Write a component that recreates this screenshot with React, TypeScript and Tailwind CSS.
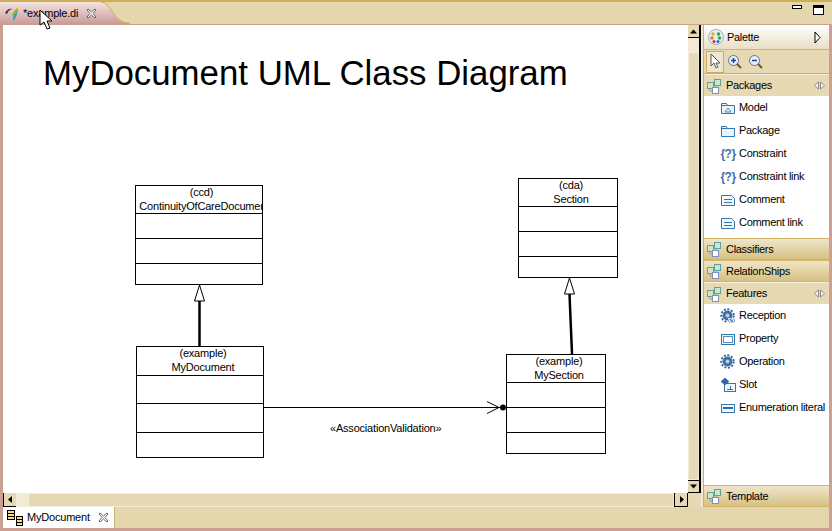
import React from 'react';

const FONT = "font-['Liberation_Sans',Arial,sans-serif]";

// small three-squares icon of the palette drawers
const DrawerIcon = () => (
  <svg width="16" height="16" viewBox="0 0 16 16" className="shrink-0">
    <rect x="1.500" y="4.500" width="6" height="6" fill="#cfe6c0" stroke="#6f9f8f" />
    <rect x="8.500" y="1.500" width="6" height="6" fill="#c9e8c8" stroke="#5f9f9f" />
    <rect x="6.500" y="9.500" width="6" height="6" fill="#ffffff" stroke="#7f8fc0" />
    <path d="M4 11v2h2M10 8v1" stroke="#8f9fb0" fill="none" />
  </svg>
);

const PinIcon = () => (
  <svg width="13" height="9" viewBox="0 0 13 9" className="shrink-0">
    <path d="M5.500 1 1.500 4.500l4 3.500zM7.500 1l4 3.500-4 3.500z" fill="#fff" stroke="#8a8a80" />
  </svg>
);

const FolderIcon = ({ mark }: { mark?: boolean }) => (
  <svg width="16" height="16" viewBox="0 0 16 16" className="shrink-0">
    <path d="M1.500 3.500h5l1 2h7v8h-13z" fill="#eaf3fb" stroke="#2f78b0" />
    <path d="M1.500 5.500h6" stroke="#2f78b0" />
    {mark && <path d="M5 12l3-4 3 4z" fill="none" stroke="#4f88b8" />}
  </svg>
);

const ConstraintIcon = () => (
  <span className="w-[16px] shrink-0 text-center text-[12px] leading-none font-bold text-[#3f6fa8] tracking-[-0.5px]">{'{?}'}</span>
);

const CommentIcon = () => (
  <svg width="16" height="16" viewBox="0 0 16 16" className="shrink-0">
    <path d="M1.500 3.500h10l3 3v7h-13z" fill="#f2f7fc" stroke="#2f78b0" />
    <path d="M4 7.500h8M4 10.500h8" stroke="#2f78b0" />
  </svg>
);

const GearIcon = ({ s }: { s?: boolean }) => (
  <svg width="16" height="16" viewBox="0 0 16 16" className="shrink-0">
    <circle cx="7.500" cy="7.500" r="5" fill="#3f6ea8" />
    <circle cx="7.500" cy="7.500" r="6.300" fill="none" stroke="#2f5f9f" strokeWidth="1.800" strokeDasharray="2 1.600" />
    <circle cx="7.500" cy="7.500" r="2" fill="#b8cfe8" />
    {s && <path d="M8 15h7v-5H8z" fill="#fff" />}
    {s && <path d="M9.500 10.500 8.500 12.500l1 2M13.500 10.500l1 2-1 2M12.500 11h-2v1.500h2V14h-2" fill="none" stroke="#2f5f9f" strokeWidth="0.800" />}
  </svg>
);

const PropertyIcon = () => (
  <svg width="16" height="16" viewBox="0 0 16 16" className="shrink-0">
    <rect x="1.500" y="3.500" width="13" height="10" fill="#eef4fa" stroke="#2f78b0" />
    <rect x="3.500" y="5.500" width="9" height="6" fill="#fff" stroke="#5f8fb8" />
  </svg>
);

const SlotIcon = () => (
  <svg width="16" height="16" viewBox="0 0 16 16" className="shrink-0">
    <rect x="4.500" y="6.500" width="11" height="8" fill="#f2f7fc" stroke="#2f78b0" />
    <path d="M5 1 9 4.500 5 8 1 4.500z" fill="#2f68a8" stroke="#1f4f8f" strokeWidth="0.500" />
    <path d="M10.500 9v3M7 12.500h6" stroke="#2f78b0" />
  </svg>
);

const EnumIcon = () => (
  <svg width="16" height="16" viewBox="0 0 16 16" className="shrink-0">
    <rect x="1.500" y="4.500" width="13" height="8" fill="#f2f7fc" stroke="#2f78b0" />
    <rect x="3" y="7" width="10" height="2" fill="#2f68a8" />
  </svg>
);

const CloseIcon = ({ cls }: { cls: string }) => (
  <svg width="11" height="11" viewBox="0 0 11 11" className={`${cls} shrink-0`}>
    <path d="M2 1 5.500 4 9 1l1 1-3 3.500 3 3.500-1 1-3.500-3L2 10 1 9l3-3.500L1 2z" fill="#fff" stroke="#444" strokeWidth="0.800" />
  </svg>
);

const PaletteItem = ({ icon, label }: { icon: React.ReactNode; label: string }) => (
  <div className="h-[23px] flex items-center pl-[16px] gap-[3px] text-[11px] tracking-[-0.3px] text-black whitespace-nowrap">
    {icon}
    <span className="-mt-[1px]">{label}</span>
  </div>
);

const OpenDrawer = ({ label }: { label: string }) => (
  <div className="h-[22px] flex items-center pl-[2px] pr-[3px] gap-[4px] bg-[#e6d9b4] text-[11px] tracking-[-0.3px] border-t border-[#f5efdc]">
    <DrawerIcon />
    <span className="flex-1">{label}</span>
    <PinIcon />
  </div>
);

const ClosedDrawer = ({ label }: { label: string }) => (
  <div className="h-[22px] shrink-0 flex items-center pl-[2px] gap-[4px] text-[11px] tracking-[-0.3px] border-y border-[#d4b566] bg-gradient-to-b from-[#efe6c8] to-[#d6c084]">
    <DrawerIcon />
    <span>{label}</span>
  </div>
);

const UmlNode = ({ pos, stereo, name, rows }: { pos: string; stereo: string; name: string; rows: string[] }) => (
  <div className={`absolute ${pos} border border-black bg-white flex flex-col text-[11px] tracking-[-0.2px] leading-[14px] text-black overflow-hidden`}>
    <div className={`${rows[0]} shrink-0 whitespace-nowrap`}>
      <div className="text-center -mt-[1px]">{stereo}</div>
      <div className="flex justify-center">{name}</div>
    </div>
    <div className={`${rows[1]} border-t border-black`} />
    <div className={`${rows[2]} border-t border-black`} />
    <div className="flex-1 border-t border-black" />
  </div>
);

const ScrollButton = ({ d, cls }: { d: string; cls: string }) => (
  <div className={`${cls} bg-[#e6d9b4] border-black flex items-center justify-center shrink-0`}>
    <svg width="7" height="7" viewBox="0 0 7 7"><path d={d} fill="#000" /></svg>
  </div>
);

export default function App() {
  return (
    <div className={`${FONT} w-[832px] h-[531px] bg-[#cb9f92] pr-[3px] pb-[3px] pl-[3px] overflow-hidden flex flex-col`}>
      {/* editor tab strip */}
      <div className="h-[25px] -mx-[3px] shrink-0 flex bg-[#e4d7ae] border-t-2 border-b border-t-[#d1ad5a] border-b-[#cb9f92] relative z-10">
        <div className="w-[98px] h-[22px] flex items-center pl-[4px] gap-[3px] text-[11px] tracking-[-0.2px] bg-gradient-to-b from-[#f4e4e0] to-[#c99b9b]">
          <svg width="16" height="16" viewBox="0 0 16 16" className="shrink-0">
            <path d="M1 8C3 4 6 3 9 4 6 4 4 6 3 9z" fill="#333" />
            <path d="M9 15c0-4 1-8 4-11l1 1c-1 4-2 8-4 10z" fill="#2aa0c8" />
            <path d="M8 10c1-3 3-5 5-7l1 1c-1 3-3 5-5 7z" fill="#8dbb1f" />
            <path d="M12 3l2 0-1 3z" fill="#f0b020" />
          </svg>
          <span>*example.di</span>
          <CloseIcon cls="ml-[5px]" />
        </div>
        <svg width="32" height="22" viewBox="0 0 32 22" className="shrink-0">
          <defs>
            <linearGradient id="tabfill" x1="0" y1="0" x2="0" y2="1">
              <stop offset="0" stopColor="#f4e4e0" />
              <stop offset="1" stopColor="#c99b9b" />
            </linearGradient>
          </defs>
          <path d="M0 0H3C13 0 16 21 30 21H32V22H0z" fill="url(#tabfill)" />
          <path d="M3 0C13 0 16 21 30 21H32" fill="none" stroke="#d1ad5a" />
        </svg>
        {/* arrow cursor over the tab */}
        <svg width="14" height="21" viewBox="0 0 14 21" className="absolute left-[39px] top-[7px]">
          <path d="M1 1v15l4-3 3 7 3-1-3-7h5z" fill="#fff" stroke="#000" />
        </svg>
        <div className="ml-auto mr-[5px] flex items-start gap-[8px] pt-[3px]">
          <div className="mr-[3px] w-[10px] h-[4px] border border-black bg-white" />
          <div className="mr-[3px] w-[11px] h-[10px] border border-black border-t-[3px] bg-white" />
        </div>
      </div>

      {/* canvas, scrollbars and palette */}
      <div className="flex-1 flex min-h-0">
        <div className="flex-1 flex flex-col min-w-0 bg-[#e6d9b4]">
          <div className="flex-1 flex min-h-0">
            <div className="flex-1 bg-white relative overflow-hidden">
              <div className="pl-[40px] pt-[27px] text-[34.800px] leading-[42px] text-black whitespace-nowrap">MyDocument UML Class Diagram</div>

              <UmlNode pos="left-[132px] top-[160px] w-[128px] h-[100px]" stereo="(ccd)" name="ContinuityOfCareDocumer" rows={['h-[27px] pl-[5px]', 'h-[25px]', 'h-[25px]']} />
              <UmlNode pos="left-[515px] top-[153px] w-[100px] h-[100px]" stereo="(cda)" name="Section" rows={['h-[27px] pl-[6px]', 'h-[25px]', 'h-[25px]']} />
              <UmlNode pos="left-[133px] top-[321px] w-[128px] h-[112px]" stereo="(example)" name="MyDocument" rows={['h-[28px] pl-[6px]', 'h-[28px]', 'h-[29px]']} />
              <UmlNode pos="left-[503px] top-[329px] w-[100px] h-[100px]" stereo="(example)" name="MySection" rows={['h-[27px] pl-[6px]', 'h-[25px]', 'h-[25px]']} />

              <svg width="685" height="468" className="absolute left-0 top-0">
                <path d="M196.500 321V276" stroke="#000" strokeWidth="2.500" />
                <path d="M196.500 260 191.500 276h10z" fill="#fff" stroke="#000" />
                <path d="M569 329 566.500 269" stroke="#000" strokeWidth="2.500" />
                <path d="M566.500 253 561.500 269h10z" fill="#fff" stroke="#000" />
                <path d="M261 382.500H500M484 376.500 496 382.500 484 388.500" stroke="#000" fill="none" />
                <circle cx="500" cy="382.500" r="3" fill="#000" />
              </svg>
              <div className="absolute left-[327px] top-[396px] text-[11px] tracking-[-0.2px] leading-[14px] text-black">«AssociationValidation»</div>
            </div>

            {/* vertical scrollbar */}
            <div className="w-[13px] flex flex-col bg-[#f1ead6] border-r-2 border-black shrink-0">
              <ScrollButton d="M3.500 1.500 7 5.500H0z" cls="h-[13px] border-b" />
              <div className="flex-1 mt-[14px] bg-[#e6d9b4] border border-[#f3ecd8]" />
              <ScrollButton d="M0 1.500h7L3.500 5.500z" cls="h-[13px] border-y" />
            </div>
          </div>
          {/* horizontal scrollbar */}
          <div className="h-[14px] flex shrink-0 bg-[#f1ead6] mr-[13px]">
            <ScrollButton d="M5 0v7L1 3.500z" cls="w-[13px] border-b border-l" />
            <div className="flex-1 ml-[12px] bg-[#e6d9b4] border border-[#f3ecd8]" />
            <ScrollButton d="M2 0v7l4-3.500z" cls="w-[14px] border-x border-b" />
          </div>
        </div>

        {/* palette */}
        <div className="w-[128px] shrink-0 pl-[2px] bg-[#f1ead6] flex flex-col">
          <div className="flex-1 flex flex-col bg-white border-l border-[#d1ad5a] min-h-0">
            <div className="h-[25px] flex items-center pl-[4px] pr-[8px] gap-[3px] text-[11px] tracking-[-0.3px] bg-gradient-to-b from-white to-[#e8dfc4] border-b border-[#c9b67e]">
              <svg width="16" height="16" viewBox="0 0 16 16" className="shrink-0">
                <circle cx="8" cy="8" r="7.500" fill="#e6eef8" stroke="#9fb0c8" />
                <circle cx="5" cy="5" r="1.800" fill="#e0b020" />
                <circle cx="10.500" cy="5" r="1.800" fill="#40a040" />
                <circle cx="4" cy="9" r="1.800" fill="#e8801f" />
                <circle cx="11.500" cy="9" r="1.800" fill="#30b030" />
                <circle cx="6" cy="12.500" r="1.500" fill="#d83030" />
                <circle cx="10" cy="12.500" r="1.500" fill="#3060d0" />
              </svg>
              <span className="flex-1">Palette</span>
              <svg width="7" height="13" viewBox="0 0 7 13"><path d="M1 1v11l5-5.500z" fill="#fff" stroke="#000" /></svg>
            </div>
            <div className="h-[24px] flex items-center gap-[3px] pl-[2px] bg-[#e6d9b4] border-b border-[#d1ad5a]">
              <div className="w-[18px] h-[22px] flex items-center justify-center border border-[#d1ad5a] bg-[#efe7cd]">
                <svg width="13" height="17" viewBox="0 0 13 17"><path d="M2 1v12l3-3 2 5 2-1-2-4h4z" fill="#fff" stroke="#555" /></svg>
              </div>
              <svg width="16" height="16" viewBox="0 0 16 16">
                <circle cx="6.500" cy="6.500" r="5" fill="#e8eef8" stroke="#5f7090" />
                <path d="M4 6.500h5M6.500 4v5" stroke="#2040a0" strokeWidth="1.500" />
                <path d="M10 10l4 4" stroke="#6a5a30" strokeWidth="2" />
              </svg>
              <svg width="16" height="16" viewBox="0 0 16 16" className="ml-[2px]">
                <circle cx="6.500" cy="6.500" r="5" fill="#e8eef8" stroke="#5f7090" />
                <path d="M4 6.500h5" stroke="#2040a0" strokeWidth="1.500" />
                <path d="M10 10l4 4" stroke="#6a5a30" strokeWidth="2" />
              </svg>
            </div>
            <OpenDrawer label="Packages" />
            <PaletteItem icon={<FolderIcon mark />} label="Model" />
            <PaletteItem icon={<FolderIcon />} label="Package" />
            <PaletteItem icon={<ConstraintIcon />} label="Constraint" />
            <PaletteItem icon={<ConstraintIcon />} label="Constraint link" />
            <PaletteItem icon={<CommentIcon />} label="Comment" />
            <PaletteItem icon={<CommentIcon />} label="Comment link" />
            <div className="h-[4px]" />
            <ClosedDrawer label="Classifiers" />
            <ClosedDrawer label="RelationShips" />
            <OpenDrawer label="Features" />
            <PaletteItem icon={<GearIcon s />} label="Reception" />
            <PaletteItem icon={<PropertyIcon />} label="Property" />
            <PaletteItem icon={<GearIcon />} label="Operation" />
            <PaletteItem icon={<SlotIcon />} label="Slot" />
            <PaletteItem icon={<EnumIcon />} label="Enumeration literal" />
            <div className="flex-1" />
            <ClosedDrawer label="Template" />
          </div>
        </div>
      </div>

      {/* bottom view tabs */}
      <div className="h-[21px] shrink-0 flex bg-[#e4d7ae]">
        <div className="w-[112px] flex items-center pl-[4px] gap-[4px] bg-white text-[11px] tracking-[-0.2px] border-r border-[#c9b67e]">
          <svg width="16" height="16" viewBox="0 0 16 16" className="shrink-0">
            <rect x="0.500" y="0.500" width="7" height="9" fill="#f5d98a" stroke="#000" />
            <path d="M0.500 3.500h7M0.500 6.500h7" stroke="#000" />
            <rect x="9.500" y="6.500" width="6" height="9" fill="#f5d98a" stroke="#000" />
            <path d="M9.500 9.500h6M9.500 12.500h6" stroke="#000" />
          </svg>
          <span>MyDocument</span>
          <CloseIcon cls="ml-[4px]" />
        </div>
      </div>
    </div>
  );
}
